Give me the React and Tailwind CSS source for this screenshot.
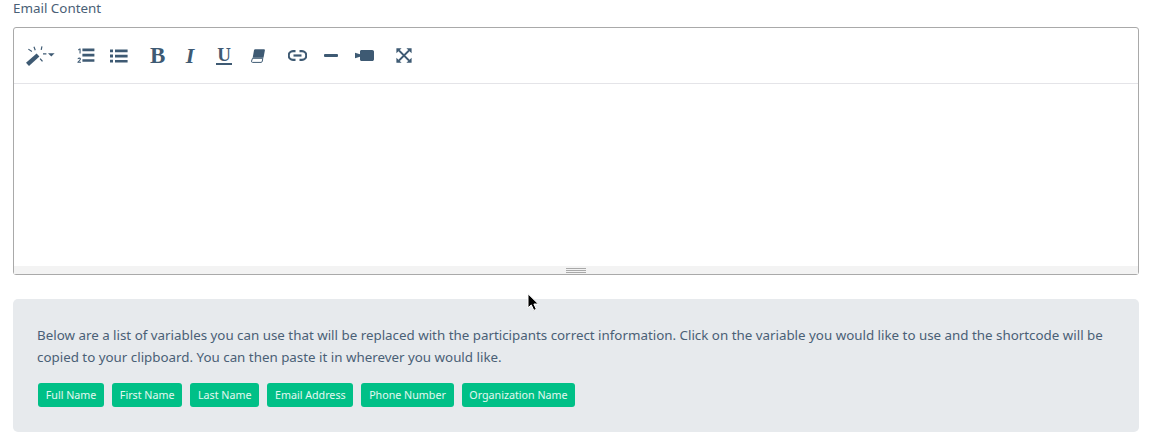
import React from 'react';

const variables = ['Full Name', 'First Name', 'Last Name', 'Email Address', 'Phone Number', 'Organization Name'];

// note-editor style toolbar glyphs, drawn by hand
const Magic = () => (
  <svg width="29" height="20" viewBox="0 0 29 20" className="fill-[#3e5a73]">
    <path d="M0 16.800 10.600 7.600 13.400 10.600 3 20Z" />
    <path d="M8.500 .6 9.800 4 8.700 4.400 7.400 1ZM15.400 .2 14.600 3.800 15.800 4 16.500 .5ZM2 3.600 5.600 6 6.200 5 2.700 2.700ZM17 7.300h3.400v1.300H17ZM14.600 12.200 17 15 16 15.800 13.600 13Z" />
    <path d="M22 7.200h6.600l-3.300 3.400Z" />
  </svg>
);

const Ordered = () => (
  <svg width="18" height="15" viewBox="0 0 18 15" className="fill-[#3e5a73]">
    <path d="M5.400 .6H17.400V3.200H5.400ZM5.400 5.800H17.400V8.400H5.400ZM5.400 11.200H17.400V13.800H5.400Z" />
    <path d="M1.200 1.200 2.600 .4H3.600V5.400H2.500V1.800L1.200 2.400Z" />
    <path d="M.4 14.800V13.900L2.400 12C3 11.400 2.800 10.700 2.100 10.700 1.600 10.700 1.200 10.900.7 11.300V10.200C1.200 9.800 1.700 9.600 2.300 9.600 3.800 9.600 4.500 11 3.400 12.300L2.100 13.700H4V14.800Z" />
  </svg>
);

const Unordered = () => (
  <svg width="18" height="14" viewBox="0 0 18 14" className="fill-[#3e5a73]">
    <path d="M0 .4h3v2.800H0ZM0 5.600h3v2.800H0ZM0 10.800h3v2.800H0ZM5 .6h12.600v2.600H5ZM5 5.800h12.600v2.600H5ZM5 11h12.600v2.600H5Z" />
  </svg>
);

const Eraser = () => (
  <svg width="14" height="14" viewBox="0 0 14 14" className="fill-[#3e5a73]">
    <path d="M4.200 .2H13c.6 0 1 .5.9 1.100L12.500 8.800H1.700L3 1.200C3.100.6 3.600.2 4.200.2Z" />
    <path d="M1.500 9.300H11.800L11.300 12.200C11.200 12.900 10.700 13.400 10 13.400H1.500C.8 13.400.4 12.900.5 12.200Z" fill="none" stroke="#3e5a73" strokeWidth="1" />
  </svg>
);

const LinkIcon = () => (
  <svg width="19" height="11" viewBox="0 0 19 11" fill="none" stroke="#3e5a73" strokeWidth="2.200">
    <path d="M7.500 1.200H5a4.300 4.300 0 0 0 0 8.600H7.500" />
    <path d="M11.500 1.200H14a4.300 4.300 0 0 1 0 8.600H11.500" />
    <path d="M5.500 5.500h8" />
  </svg>
);

const Minus = () => (
  <svg width="14" height="3" viewBox="0 0 14 3" className="fill-[#3e5a73]">
    <rect width="14" height="3" rx="1" />
  </svg>
);

const Video = () => (
  <svg width="19" height="11" viewBox="0 0 19 11" className="fill-[#3e5a73]">
    <path d="M0 2.800 5 4.200V1.500C5 .7 5.700 0 6.500 0H17.200C18.200 0 19 .8 19 1.800V9.200C19 10.200 18.200 11 17.200 11H6.500C5.700 11 5 10.300 5 9.500V6.800L0 8.200Z" />
  </svg>
);

const Expand = () => (
  <svg width="16" height="15" viewBox="0 0 16 15" className="fill-[#3e5a73]">
    <path d="M3 2.500 13 12.500M13 2.500 3 12.500" fill="none" stroke="#3e5a73" strokeWidth="1.800" />
    <path d="M.4.200H5.600L.4 5.200ZM15.600.200H10.400L15.600 5.200ZM.4 14.800H5.600L.4 9.800ZM15.600 14.800H10.400L15.600 9.800Z" />
  </svg>
);

const Cursor = () => (
  <svg width="13" height="19" viewBox="0 0 13 19" className="absolute left-[527px] top-[293px]">
    <path d="M1 .8V14.800L4.300 11.900 6.800 17.400 9.400 16.300 6.900 11H11.400Z" fill="#000" stroke="#fff" strokeWidth="1" />
  </svg>
);

export default function App() {
  return (
    <div className="relative h-[442px] w-[1158px] overflow-hidden bg-white pl-[13px] pr-[19px] text-[#4a6076] font-['Noto_Sans',sans-serif]">
      <label className="block h-[27px] text-[13.4px] leading-[16px]">Email Content</label>

      <div className="flex h-[248px] flex-col rounded-[3px] border border-[#a9a9a9]">
        <div className="flex h-[56px] items-center border-b border-[#e4e4e8] pl-[12px] text-[#3e5a73]">
          <span className="flex w-[29px]"><Magic /></span>
          <span className="ml-[22px] flex"><Ordered /></span>
          <span className="ml-[15px] flex"><Unordered /></span>
          <span className="ml-[22px] w-[14px] text-center font-['Liberation_Serif',serif] text-[23px] font-bold leading-none">B</span>
          <span className="ml-[21px] w-[10px] text-center font-['Liberation_Serif',serif] text-[22px] font-bold italic leading-none">I</span>
          <span className="ml-[21px] w-[16px] border-b-2 border-[#3e5a73] text-center font-['Liberation_Serif',serif] text-[19px] font-bold leading-[17px]">U</span>
          <span className="ml-[19px] flex"><Eraser /></span>
          <span className="ml-[23px] flex"><LinkIcon /></span>
          <span className="ml-[17px] flex"><Minus /></span>
          <span className="ml-[17px] flex"><Video /></span>
          <span className="ml-[22px] flex"><Expand /></span>
        </div>
        <div className="flex-1" />
        <div className="flex h-[8px] flex-col items-center justify-center gap-[1px] bg-[#f3f3f3]">
          <div className="h-px w-[20px] bg-[#a9a9a9]" />
          <div className="h-px w-[20px] bg-[#a9a9a9]" />
          <div className="h-px w-[20px] bg-[#a9a9a9]" />
        </div>
      </div>

      <div className="mt-[24px] h-[133px] rounded-[5px] bg-[#e7eaed] pl-[24px] pr-[20px] pt-[25px]">
        <p className="text-[13.35px] leading-[22px]">
          Below are a list of variables you can use that will be replaced with the participants correct information. Click on the variable you would like to use and the shortcode will be copied to your clipboard. You can then paste it in wherever you would like.
        </p>
        <div className="mt-[15px] ml-px flex gap-[8px]">
          {variables.map((name) => (
            <span key={name} className="flex h-[24px] items-center rounded-[3px] bg-[#00c087] px-[7.75px] text-[10.7px] text-[#e4f8f1]">
              {name}
            </span>
          ))}
        </div>
      </div>

      <Cursor />
    </div>
  );
}
